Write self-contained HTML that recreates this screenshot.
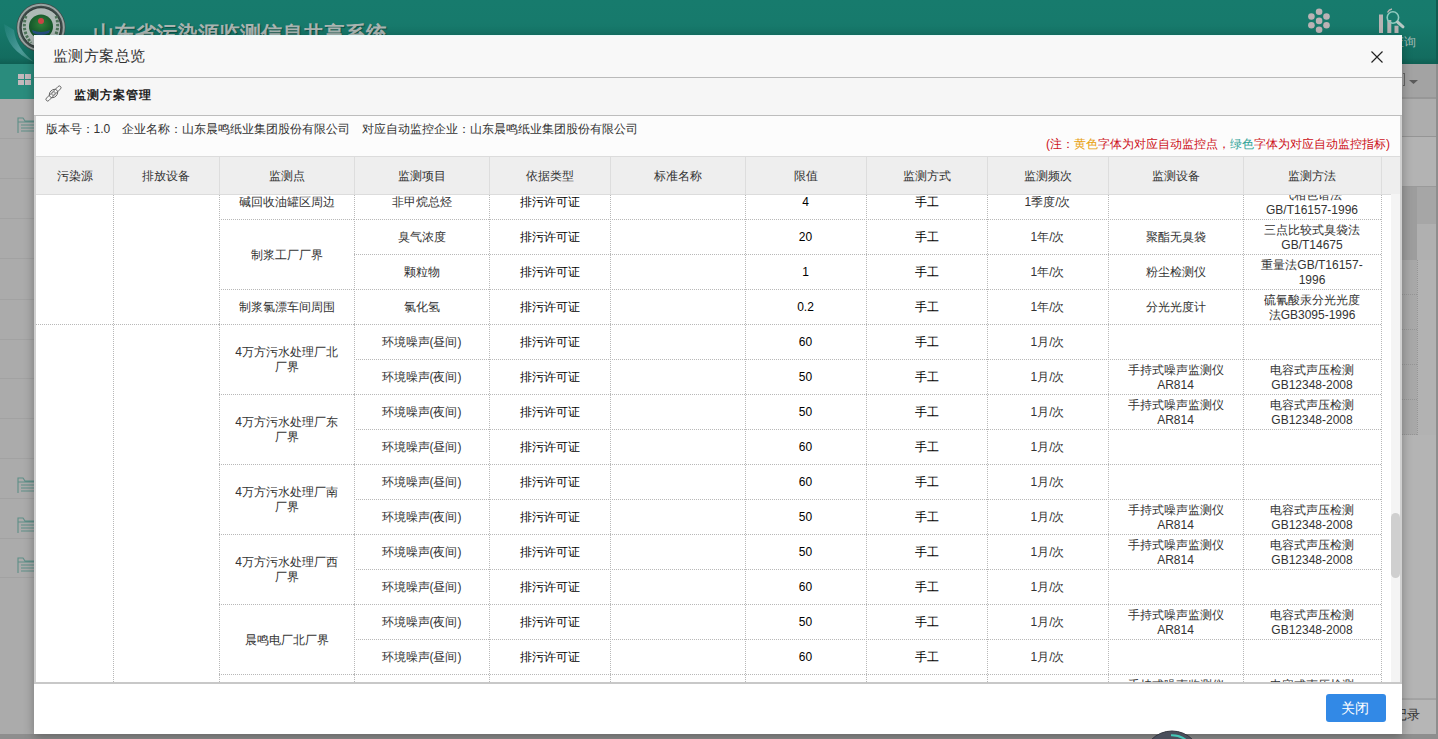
<!DOCTYPE html>
<html><head><meta charset="utf-8">
<style>
*{margin:0;padding:0;box-sizing:border-box}
html,body{width:1438px;height:739px;overflow:hidden;background:#a6a6a6;font-family:"Liberation Sans",sans-serif;font-size:12px;color:#333}
.a{position:absolute}
/* backdrop page */
#hdr{left:0;top:0;width:1438px;height:64px;background:linear-gradient(#177b6d 0%,#177a6c 35%,#136c5f 90%,#0f5f53 100%)}
#nav{left:0;top:64px;width:1438px;height:35px;background:#a3a3a3;border-bottom:1px solid #959595}
#navl{left:0;top:64px;width:60px;height:35px;background:#2a8c7d}
#side{left:0;top:99px;width:220px;height:640px;background:#ababab}
.sl{position:absolute;left:0;width:34px;height:1px;background:#a2a2a2}
#right{left:1402px;top:99px;width:36px;height:640px;background:#a4a4a4}
#bottom{left:0;top:734px;width:1438px;height:5px;background:#8e8e8e}
.title{left:93px;top:19.5px;font-size:21px;font-weight:bold;color:#aab4b1;text-shadow:1px 1px 1px rgba(0,40,30,.5);letter-spacing:0px;white-space:nowrap}
/* modal */
#modal{left:34px;top:35px;width:1368px;height:699px;background:#fff;box-shadow:0 3px 10px rgba(0,0,0,.3)}
#mh{left:0;top:0;width:1368px;height:43px;background:#f8f8f8;border-bottom:1px solid #bababa;box-shadow:0 1px 0 #e4e4e4;border-top:1px solid #eafafa}
#mh .tt{position:absolute;left:19px;top:11px;font-size:15px;letter-spacing:0.4px;color:#333;line-height:18px}
#close{left:1337px;top:15px;width:12px;height:12px}
#ph{left:0;top:43px;width:1368px;height:38px;background:#f6f6f6;border-bottom:1px solid #bdbdbd;box-shadow:0 1px 0 #e8e8e8}
#ph .tt{position:absolute;left:39.5px;top:9px;font-size:12px;font-weight:bold;color:#222;line-height:16px;letter-spacing:1px}
#info{left:2px;top:81px;width:1364px;height:40px;background:#fcfcfc}
#info .l1{position:absolute;left:9.5px;top:6px;line-height:14px;white-space:pre;color:#333}
#info .l2{position:absolute;right:10px;top:21px;line-height:14px;white-space:pre;color:#cc1020}
#thead{left:1px;top:121px;width:1366px;height:39px;background:#eeeeee;border-top:1px solid #dcdcdc;border-bottom:1px solid #dcdcdc}
#footer{left:0;top:647px;width:1368px;height:52px;background:#fff;border-top:2px solid #c8c8c8}
#btn{left:1292px;top:10px;width:60px;height:28px;background:#3289e6;border-radius:3px;color:#fff;font-size:14px;line-height:29px;text-align:center;text-indent:-2px}
/* table (page coords) */
#tb{left:-34px;top:-35px;width:1438px;height:739px}
.th{position:absolute;top:158px;height:37px;line-height:37px;text-align:center;color:#333}
.thl{position:absolute;top:157px;height:37px;width:1px;background:#dddddd}
#clip{left:35px;top:194px;width:1366px;height:488px;overflow:hidden;background:#fff}
#clip .in{position:absolute;left:-35px;top:-194px;width:1438px;height:739px}
.t{position:absolute;padding-top:2px;display:flex;align-items:center;justify-content:center;text-align:center;line-height:15px;color:#333}
.k{color:#000}
.hl{position:absolute;height:1px;border-top:1px dotted #b8b8b8}
.vl{position:absolute;width:1px;border-left:1px dotted #b8b8b8}
#sbt{left:1391px;top:194px;width:10px;height:488px;background:#f4f4f4}
#sb{left:1391px;top:513px;width:9px;height:65px;background:#cfcfcf;border-radius:5px}
</style></head><body>
<div id="hdr" class="a"></div>
<div id="navl" class="a"></div>
<div id="nav" class="a" style="left:60px;width:1378px"></div>
<div id="side" class="a"></div>
<div id="right" class="a"></div>
<div id="bottom" class="a"></div>
<div class="a title">山东省污染源监测信息共享系统</div>
<svg class="a" style="left:0;top:0" width="100" height="70" viewBox="0 0 100 70">
  <defs>
    <radialGradient id="lg" cx="50%" cy="40%" r="60%"><stop offset="0" stop-color="#2f7f3a"/><stop offset="1" stop-color="#0f4d25"/></radialGradient>
    <linearGradient id="sw" x1="0" y1="0" x2="1" y2="1"><stop offset="0" stop-color="#5fb0c0" stop-opacity=".1"/><stop offset=".6" stop-color="#7cc0c8" stop-opacity=".55"/><stop offset="1" stop-color="#a8d8d0" stop-opacity=".2"/></linearGradient>
  </defs>
  <path d="M4 24 Q6 50 34 62 Q16 48 14 30 Z" fill="url(#sw)"/>
  <circle cx="41" cy="27.5" r="24.5" fill="#3f4b49"/>
  <circle cx="41" cy="27.5" r="22.8" fill="none" stroke="#9aa4a2" stroke-width="2"/>
  <circle cx="41" cy="27.5" r="20.3" fill="#2f3a38"/>
  <circle cx="41" cy="27.5" r="19.3" fill="#aebab6"/>
  <path d="M26 16 Q21 30 31 43 M56 16 Q61 30 51 43" stroke="#4d7358" stroke-width="3" fill="none" stroke-dasharray="2.5 1.5"/>
  <circle cx="41" cy="26.5" r="12" fill="url(#lg)"/>
  <circle cx="41" cy="21" r="3" fill="#c94545"/>
  <path d="M32 30 Q41 34 50 30 L49 33 Q41 37 33 33Z" fill="#2a4d9a" opacity=".8"/>
</svg>
<svg class="a" style="left:1300px;top:4px" width="40" height="34" viewBox="0 0 40 34">
  <g fill="#bbb2b5">
  <circle cx="19.1" cy="7.8" r="3.3"/><circle cx="11.4" cy="12.5" r="3.3"/><circle cx="26.5" cy="12.5" r="3.3"/>
  <circle cx="19.1" cy="16.9" r="3.3"/><circle cx="11.4" cy="21.2" r="3.3"/><circle cx="26.5" cy="21.2" r="3.3"/><circle cx="19.1" cy="25.8" r="3.3"/>
  </g>
</svg>
<svg class="a" style="left:1370px;top:0" width="50" height="40" viewBox="0 0 50 40">
  <g fill="#b8b3b3"><rect x="9" y="14.5" width="4" height="18.5"/><rect x="17.3" y="20" width="4" height="13"/><rect x="24.5" y="25.7" width="4" height="7.3"/></g>
  <circle cx="22.9" cy="17.5" r="5.7" fill="none" stroke="#8fcabf" stroke-width="1.6"/>
  <path d="M27.5 22 L33 26.8" stroke="#b8c8c4" stroke-width="3" stroke-linecap="round"/>
  <path d="M17.5 12.5 Q19 9.5 22 9" stroke="#b8b3b3" stroke-width="1.5" fill="none"/>
</svg>
<div class="a" style="left:1392px;top:35px;font-size:12px;color:#a9bdb8;line-height:14px">查询</div>
<div class="sl" style="top:138px"></div><div class="sl" style="top:178px"></div><div class="sl" style="top:218px"></div><div class="sl" style="top:258px"></div><div class="sl" style="top:299px"></div><div class="sl" style="top:339px"></div><div class="sl" style="top:378px"></div><div class="sl" style="top:418px"></div><div class="sl" style="top:458px"></div><div class="sl" style="top:498px"></div><div class="sl" style="top:538px"></div><div class="sl" style="top:577px"></div>
<svg class="a" style="left:17px;top:116px" width="18" height="18" viewBox="0 0 18 18"><path d="M1 17V2h5l2 3h10M1 6h17M4 9h14M4 12h14M4 15h14" stroke="#5e8f88" stroke-width="1.1" fill="none"/></svg>
<svg class="a" style="left:17px;top:476px" width="18" height="18" viewBox="0 0 18 18"><path d="M1 17V2h5l2 3h10M1 6h17M4 9h14M4 12h14M4 15h14" stroke="#5e8f88" stroke-width="1.1" fill="none"/></svg>
<svg class="a" style="left:17px;top:516px" width="18" height="18" viewBox="0 0 18 18"><path d="M1 17V2h5l2 3h10M1 6h17M4 9h14M4 12h14M4 15h14" stroke="#5e8f88" stroke-width="1.1" fill="none"/></svg>
<svg class="a" style="left:17px;top:556px" width="18" height="18" viewBox="0 0 18 18"><path d="M1 17V2h5l2 3h10M1 6h17M4 9h14M4 12h14M4 15h14" stroke="#5e8f88" stroke-width="1.1" fill="none"/></svg>
<div class="a" style="left:18px;top:74px;width:6px;height:5px;background:#c4b8bc"></div>
<div class="a" style="left:25px;top:74px;width:6px;height:5px;background:#c4b8bc"></div>
<div class="a" style="left:18px;top:80px;width:6px;height:5px;background:#c4b8bc"></div>
<div class="a" style="left:25px;top:80px;width:6px;height:5px;background:#c4b8bc"></div>
<!-- right strip -->
<div class="a" style="left:1402px;top:97px;width:36px;height:2px;background:#979797"></div>
<div class="a" style="left:1402px;top:99px;width:36px;height:37px;background:#adadad"></div>
<div class="a" style="left:1402px;top:136px;width:36px;height:1px;background:#959595"></div>
<div class="a" style="left:1402px;top:137px;width:36px;height:49px;background:#b3b3b3"></div>
<div class="a" style="left:1402px;top:186px;width:36px;height:1px;background:#9a9a9a"></div>
<div class="a" style="left:1402px;top:187px;width:15px;height:73px;background:#9d9d9d"></div>
<div class="a" style="left:1417px;top:187px;width:19px;height:37px;background:#a6a6a6"></div>
<div class="a" style="left:1417px;top:224px;width:19px;height:36px;background:#b0b0b0"></div>
<div class="a" style="left:1402px;top:260px;width:15px;height:175px;background:#a8a8a8"></div>
<div class="a" style="left:1417px;top:260px;width:19px;height:175px;background:#b2b2b2"></div>
<div class="a" style="left:1417px;top:260px;width:1px;height:175px;border-left:1px dotted #959595"></div>
<div class="a" style="left:1402px;top:294px;width:15px;height:1px;border-top:1px dotted #959595"></div>
<div class="a" style="left:1402px;top:329px;width:15px;height:1px;border-top:1px dotted #959595"></div>
<div class="a" style="left:1402px;top:364px;width:15px;height:1px;border-top:1px dotted #959595"></div>
<div class="a" style="left:1402px;top:399px;width:15px;height:1px;border-top:1px dotted #959595"></div>
<div class="a" style="left:1402px;top:434px;width:15px;height:1px;border-top:1px dotted #959595"></div>
<div class="a" style="left:1402px;top:435px;width:36px;height:263px;background:#b4b4b4"></div>
<div class="a" style="left:1402px;top:699px;width:36px;height:1px;background:#a2a2a2"></div>
<div class="a" style="left:1402px;top:700px;width:34px;height:34px;background:#b6b6b6"></div>
<div class="a" style="left:1436px;top:64px;width:2px;height:675px;background:#8e8e8e"></div><div class="a" style="left:1436px;top:0;width:2px;height:64px;background:#0f5d52"></div>
<div class="a" style="left:1394px;top:707px;font-size:13px;line-height:15px;color:#333">记录</div>
<div class="a" style="left:1403px;top:73px;width:2px;height:13px;border:1px solid #666;border-left:none"></div>
<svg class="a" style="left:1409px;top:80px" width="9" height="4" viewBox="0 0 9 4"><path d="M0 0h9L4.5 4z" fill="#5a5a5a"/></svg>


<div id="modal" class="a">
  <div id="mh" class="a"><div class="tt">监测方案总览</div>
    <svg id="close" class="a" viewBox="0 0 12 12"><path d="M0.5 0.5L11.5 11.5M11.5 0.5L0.5 11.5" stroke="#222" stroke-width="1.15"/></svg>
  </div>
  <div id="ph" class="a"><div class="tt">监测方案管理</div>
    <svg class="a" style="left:10.5px;top:6.5px" width="17" height="17" viewBox="0 0 18 18">
      <g transform="rotate(-45 9 9)" fill="none" stroke="#555" stroke-width="0.9">
        <rect x="-1.5" y="7.2" width="21" height="3.6" rx="1.8"/>
        <ellipse cx="9" cy="9" rx="5" ry="3.8"/>
        <ellipse cx="9" cy="9" rx="2.2" ry="1.4" stroke="#777"/>
      </g>
    </svg></div>
  <div id="info" class="a">
    <div class="l1">版本号：1.0　企业名称：山东晨鸣纸业集团股份有限公司　对应自动监控企业：山东晨鸣纸业集团股份有限公司</div>
    <div class="l2">(注：<span style="color:#e8a00c">黄色</span>字体为对应自动监控点，<span style="color:#2ea396">绿色</span>字体为对应自动监控指标)</div>
  </div>
  <div id="tb" class="a">
    <div id="thead" class="a" style="left:36px;top:156px;width:1364px"></div>
    <div class="th" style="left:36px;width:77px">污染源</div>
<div class="th" style="left:113px;width:106px">排放设备</div>
<div class="th" style="left:219px;width:135px">监测点</div>
<div class="th" style="left:354px;width:135px">监测项目</div>
<div class="th" style="left:489px;width:121px">依据类型</div>
<div class="th" style="left:610px;width:135px">标准名称</div>
<div class="th" style="left:745px;width:121px">限值</div>
<div class="th" style="left:866px;width:121px">监测方式</div>
<div class="th" style="left:987px;width:121px">监测频次</div>
<div class="th" style="left:1108px;width:135px">监测设备</div>
<div class="th" style="left:1243px;width:138px">监测方法</div>
<div class="thl" style="left:113px"></div>
<div class="thl" style="left:219px"></div>
<div class="thl" style="left:354px"></div>
<div class="thl" style="left:489px"></div>
<div class="thl" style="left:610px"></div>
<div class="thl" style="left:745px"></div>
<div class="thl" style="left:866px"></div>
<div class="thl" style="left:987px"></div>
<div class="thl" style="left:1108px"></div>
<div class="thl" style="left:1243px"></div>
<div class="thl" style="left:1381px"></div>
  </div>
  <div id="clip" class="a" style="left:2px;top:160px;width:1364px;height:487px">
    <div class="in" style="left:-36px;top:-195px">
    <div class="hl" style="left:354px;width:1027px;top:219px"></div>
<div class="hl" style="left:354px;width:1027px;top:254px"></div>
<div class="hl" style="left:354px;width:1027px;top:289px"></div>
<div class="hl" style="left:354px;width:1027px;top:324px"></div>
<div class="hl" style="left:354px;width:1027px;top:359px"></div>
<div class="hl" style="left:354px;width:1027px;top:394px"></div>
<div class="hl" style="left:354px;width:1027px;top:429px"></div>
<div class="hl" style="left:354px;width:1027px;top:464px"></div>
<div class="hl" style="left:354px;width:1027px;top:499px"></div>
<div class="hl" style="left:354px;width:1027px;top:534px"></div>
<div class="hl" style="left:354px;width:1027px;top:569px"></div>
<div class="hl" style="left:354px;width:1027px;top:604px"></div>
<div class="hl" style="left:354px;width:1027px;top:639px"></div>
<div class="hl" style="left:354px;width:1027px;top:674px"></div>
<div class="hl" style="left:219px;width:135px;top:219px"></div>
<div class="hl" style="left:219px;width:135px;top:289px"></div>
<div class="hl" style="left:219px;width:135px;top:324px"></div>
<div class="hl" style="left:219px;width:135px;top:394px"></div>
<div class="hl" style="left:219px;width:135px;top:464px"></div>
<div class="hl" style="left:219px;width:135px;top:534px"></div>
<div class="hl" style="left:219px;width:135px;top:604px"></div>
<div class="hl" style="left:219px;width:135px;top:674px"></div>
<div class="hl" style="left:36px;width:183px;top:324px"></div>
<div class="vl" style="left:113px;top:194px;height:488px"></div>
<div class="vl" style="left:219px;top:194px;height:488px"></div>
<div class="vl" style="left:354px;top:194px;height:488px"></div>
<div class="vl" style="left:489px;top:194px;height:488px"></div>
<div class="vl" style="left:610px;top:194px;height:488px"></div>
<div class="vl" style="left:745px;top:194px;height:488px"></div>
<div class="vl" style="left:866px;top:194px;height:488px"></div>
<div class="vl" style="left:987px;top:194px;height:488px"></div>
<div class="vl" style="left:1108px;top:194px;height:488px"></div>
<div class="vl" style="left:1243px;top:194px;height:488px"></div>
<div class="vl" style="left:1381px;top:194px;height:488px"></div>
<div class="t" style="left:354px;width:135px;top:184px;height:35px">非甲烷总烃</div>
<div class="t k" style="left:489px;width:121px;top:184px;height:35px">排污许可证</div>
<div class="t k" style="left:745px;width:121px;top:184px;height:35px">4</div>
<div class="t k" style="left:866px;width:121px;top:184px;height:35px">手工</div>
<div class="t" style="left:987px;width:121px;top:184px;height:35px">1季度/次</div>
<div class="t m" style="left:1243px;width:138px;top:184px;height:35px">气相色谱法<br>GB/T16157-1996</div>
<div class="t" style="left:354px;width:135px;top:219px;height:35px">臭气浓度</div>
<div class="t k" style="left:489px;width:121px;top:219px;height:35px">排污许可证</div>
<div class="t k" style="left:745px;width:121px;top:219px;height:35px">20</div>
<div class="t k" style="left:866px;width:121px;top:219px;height:35px">手工</div>
<div class="t" style="left:987px;width:121px;top:219px;height:35px">1年/次</div>
<div class="t m" style="left:1108px;width:135px;top:219px;height:35px">聚酯无臭袋</div>
<div class="t m" style="left:1243px;width:138px;top:219px;height:35px">三点比较式臭袋法<br>GB/T14675</div>
<div class="t" style="left:354px;width:135px;top:254px;height:35px">颗粒物</div>
<div class="t k" style="left:489px;width:121px;top:254px;height:35px">排污许可证</div>
<div class="t k" style="left:745px;width:121px;top:254px;height:35px">1</div>
<div class="t k" style="left:866px;width:121px;top:254px;height:35px">手工</div>
<div class="t" style="left:987px;width:121px;top:254px;height:35px">1年/次</div>
<div class="t m" style="left:1108px;width:135px;top:254px;height:35px">粉尘检测仪</div>
<div class="t m" style="left:1243px;width:138px;top:254px;height:35px">重量法GB/T16157-<br>1996</div>
<div class="t" style="left:354px;width:135px;top:289px;height:35px">氯化氢</div>
<div class="t k" style="left:489px;width:121px;top:289px;height:35px">排污许可证</div>
<div class="t k" style="left:745px;width:121px;top:289px;height:35px">0.2</div>
<div class="t k" style="left:866px;width:121px;top:289px;height:35px">手工</div>
<div class="t" style="left:987px;width:121px;top:289px;height:35px">1年/次</div>
<div class="t m" style="left:1108px;width:135px;top:289px;height:35px">分光光度计</div>
<div class="t m" style="left:1243px;width:138px;top:289px;height:35px">硫氰酸汞分光光度<br>法GB3095-1996</div>
<div class="t" style="left:354px;width:135px;top:324px;height:35px">环境噪声(昼间)</div>
<div class="t k" style="left:489px;width:121px;top:324px;height:35px">排污许可证</div>
<div class="t k" style="left:745px;width:121px;top:324px;height:35px">60</div>
<div class="t k" style="left:866px;width:121px;top:324px;height:35px">手工</div>
<div class="t" style="left:987px;width:121px;top:324px;height:35px">1月/次</div>
<div class="t" style="left:354px;width:135px;top:359px;height:35px">环境噪声(夜间)</div>
<div class="t k" style="left:489px;width:121px;top:359px;height:35px">排污许可证</div>
<div class="t k" style="left:745px;width:121px;top:359px;height:35px">50</div>
<div class="t k" style="left:866px;width:121px;top:359px;height:35px">手工</div>
<div class="t" style="left:987px;width:121px;top:359px;height:35px">1月/次</div>
<div class="t m" style="left:1108px;width:135px;top:359px;height:35px">手持式噪声监测仪<br>AR814</div>
<div class="t m" style="left:1243px;width:138px;top:359px;height:35px">电容式声压检测<br>GB12348-2008</div>
<div class="t" style="left:354px;width:135px;top:394px;height:35px">环境噪声(夜间)</div>
<div class="t k" style="left:489px;width:121px;top:394px;height:35px">排污许可证</div>
<div class="t k" style="left:745px;width:121px;top:394px;height:35px">50</div>
<div class="t k" style="left:866px;width:121px;top:394px;height:35px">手工</div>
<div class="t" style="left:987px;width:121px;top:394px;height:35px">1月/次</div>
<div class="t m" style="left:1108px;width:135px;top:394px;height:35px">手持式噪声监测仪<br>AR814</div>
<div class="t m" style="left:1243px;width:138px;top:394px;height:35px">电容式声压检测<br>GB12348-2008</div>
<div class="t" style="left:354px;width:135px;top:429px;height:35px">环境噪声(昼间)</div>
<div class="t k" style="left:489px;width:121px;top:429px;height:35px">排污许可证</div>
<div class="t k" style="left:745px;width:121px;top:429px;height:35px">60</div>
<div class="t k" style="left:866px;width:121px;top:429px;height:35px">手工</div>
<div class="t" style="left:987px;width:121px;top:429px;height:35px">1月/次</div>
<div class="t" style="left:354px;width:135px;top:464px;height:35px">环境噪声(昼间)</div>
<div class="t k" style="left:489px;width:121px;top:464px;height:35px">排污许可证</div>
<div class="t k" style="left:745px;width:121px;top:464px;height:35px">60</div>
<div class="t k" style="left:866px;width:121px;top:464px;height:35px">手工</div>
<div class="t" style="left:987px;width:121px;top:464px;height:35px">1月/次</div>
<div class="t" style="left:354px;width:135px;top:499px;height:35px">环境噪声(夜间)</div>
<div class="t k" style="left:489px;width:121px;top:499px;height:35px">排污许可证</div>
<div class="t k" style="left:745px;width:121px;top:499px;height:35px">50</div>
<div class="t k" style="left:866px;width:121px;top:499px;height:35px">手工</div>
<div class="t" style="left:987px;width:121px;top:499px;height:35px">1月/次</div>
<div class="t m" style="left:1108px;width:135px;top:499px;height:35px">手持式噪声监测仪<br>AR814</div>
<div class="t m" style="left:1243px;width:138px;top:499px;height:35px">电容式声压检测<br>GB12348-2008</div>
<div class="t" style="left:354px;width:135px;top:534px;height:35px">环境噪声(夜间)</div>
<div class="t k" style="left:489px;width:121px;top:534px;height:35px">排污许可证</div>
<div class="t k" style="left:745px;width:121px;top:534px;height:35px">50</div>
<div class="t k" style="left:866px;width:121px;top:534px;height:35px">手工</div>
<div class="t" style="left:987px;width:121px;top:534px;height:35px">1月/次</div>
<div class="t m" style="left:1108px;width:135px;top:534px;height:35px">手持式噪声监测仪<br>AR814</div>
<div class="t m" style="left:1243px;width:138px;top:534px;height:35px">电容式声压检测<br>GB12348-2008</div>
<div class="t" style="left:354px;width:135px;top:569px;height:35px">环境噪声(昼间)</div>
<div class="t k" style="left:489px;width:121px;top:569px;height:35px">排污许可证</div>
<div class="t k" style="left:745px;width:121px;top:569px;height:35px">60</div>
<div class="t k" style="left:866px;width:121px;top:569px;height:35px">手工</div>
<div class="t" style="left:987px;width:121px;top:569px;height:35px">1月/次</div>
<div class="t" style="left:354px;width:135px;top:604px;height:35px">环境噪声(夜间)</div>
<div class="t k" style="left:489px;width:121px;top:604px;height:35px">排污许可证</div>
<div class="t k" style="left:745px;width:121px;top:604px;height:35px">50</div>
<div class="t k" style="left:866px;width:121px;top:604px;height:35px">手工</div>
<div class="t" style="left:987px;width:121px;top:604px;height:35px">1月/次</div>
<div class="t m" style="left:1108px;width:135px;top:604px;height:35px">手持式噪声监测仪<br>AR814</div>
<div class="t m" style="left:1243px;width:138px;top:604px;height:35px">电容式声压检测<br>GB12348-2008</div>
<div class="t" style="left:354px;width:135px;top:639px;height:35px">环境噪声(昼间)</div>
<div class="t k" style="left:489px;width:121px;top:639px;height:35px">排污许可证</div>
<div class="t k" style="left:745px;width:121px;top:639px;height:35px">60</div>
<div class="t k" style="left:866px;width:121px;top:639px;height:35px">手工</div>
<div class="t" style="left:987px;width:121px;top:639px;height:35px">1月/次</div>
<div class="t" style="left:354px;width:135px;top:674px;height:35px">环境噪声(夜间)</div>
<div class="t k" style="left:489px;width:121px;top:674px;height:35px">排污许可证</div>
<div class="t k" style="left:745px;width:121px;top:674px;height:35px">50</div>
<div class="t k" style="left:866px;width:121px;top:674px;height:35px">手工</div>
<div class="t" style="left:987px;width:121px;top:674px;height:35px">1月/次</div>
<div class="t m" style="left:1108px;width:135px;top:674px;height:35px">手持式噪声监测仪<br>AR814</div>
<div class="t m" style="left:1243px;width:138px;top:674px;height:35px">电容式声压检测<br>GB12348-2008</div>
<div class="t m" style="left:219px;width:135px;top:184px;height:35px">碱回收油罐区周边</div>
<div class="t m" style="left:219px;width:135px;top:219px;height:70px">制浆工厂厂界</div>
<div class="t m" style="left:219px;width:135px;top:289px;height:35px">制浆氯漂车间周围</div>
<div class="t m" style="left:219px;width:135px;top:324px;height:70px">4万方污水处理厂北<br>厂界</div>
<div class="t m" style="left:219px;width:135px;top:394px;height:70px">4万方污水处理厂东<br>厂界</div>
<div class="t m" style="left:219px;width:135px;top:464px;height:70px">4万方污水处理厂南<br>厂界</div>
<div class="t m" style="left:219px;width:135px;top:534px;height:70px">4万方污水处理厂西<br>厂界</div>
<div class="t m" style="left:219px;width:135px;top:604px;height:70px">晨鸣电厂北厂界</div>
    </div>
  </div>
  <div id="sbt" class="a" style="left:1357px;top:159px"></div>
  <div id="sb" class="a" style="left:1357px;top:478px"></div>
  <div class="a" style="left:0;top:81px;width:2px;height:566px;background:#d0d0d0"></div><div class="a" style="left:1366px;top:81px;width:2px;height:566px;background:#d0d0d0"></div>
  <div id="footer" class="a"><div id="btn" class="a">关闭</div></div>
</div>
<svg class="a" style="left:1140px;top:729px" width="64" height="10" viewBox="0 0 64 10">
  <circle cx="32" cy="31" r="29" fill="#4a4f5c" stroke="#33363f" stroke-width="1"/>
  <path d="M31 6.3 Q39 6 45.5 10.5" stroke="#45c8b8" stroke-width="2" fill="none"/>
</svg>
</body></html>
